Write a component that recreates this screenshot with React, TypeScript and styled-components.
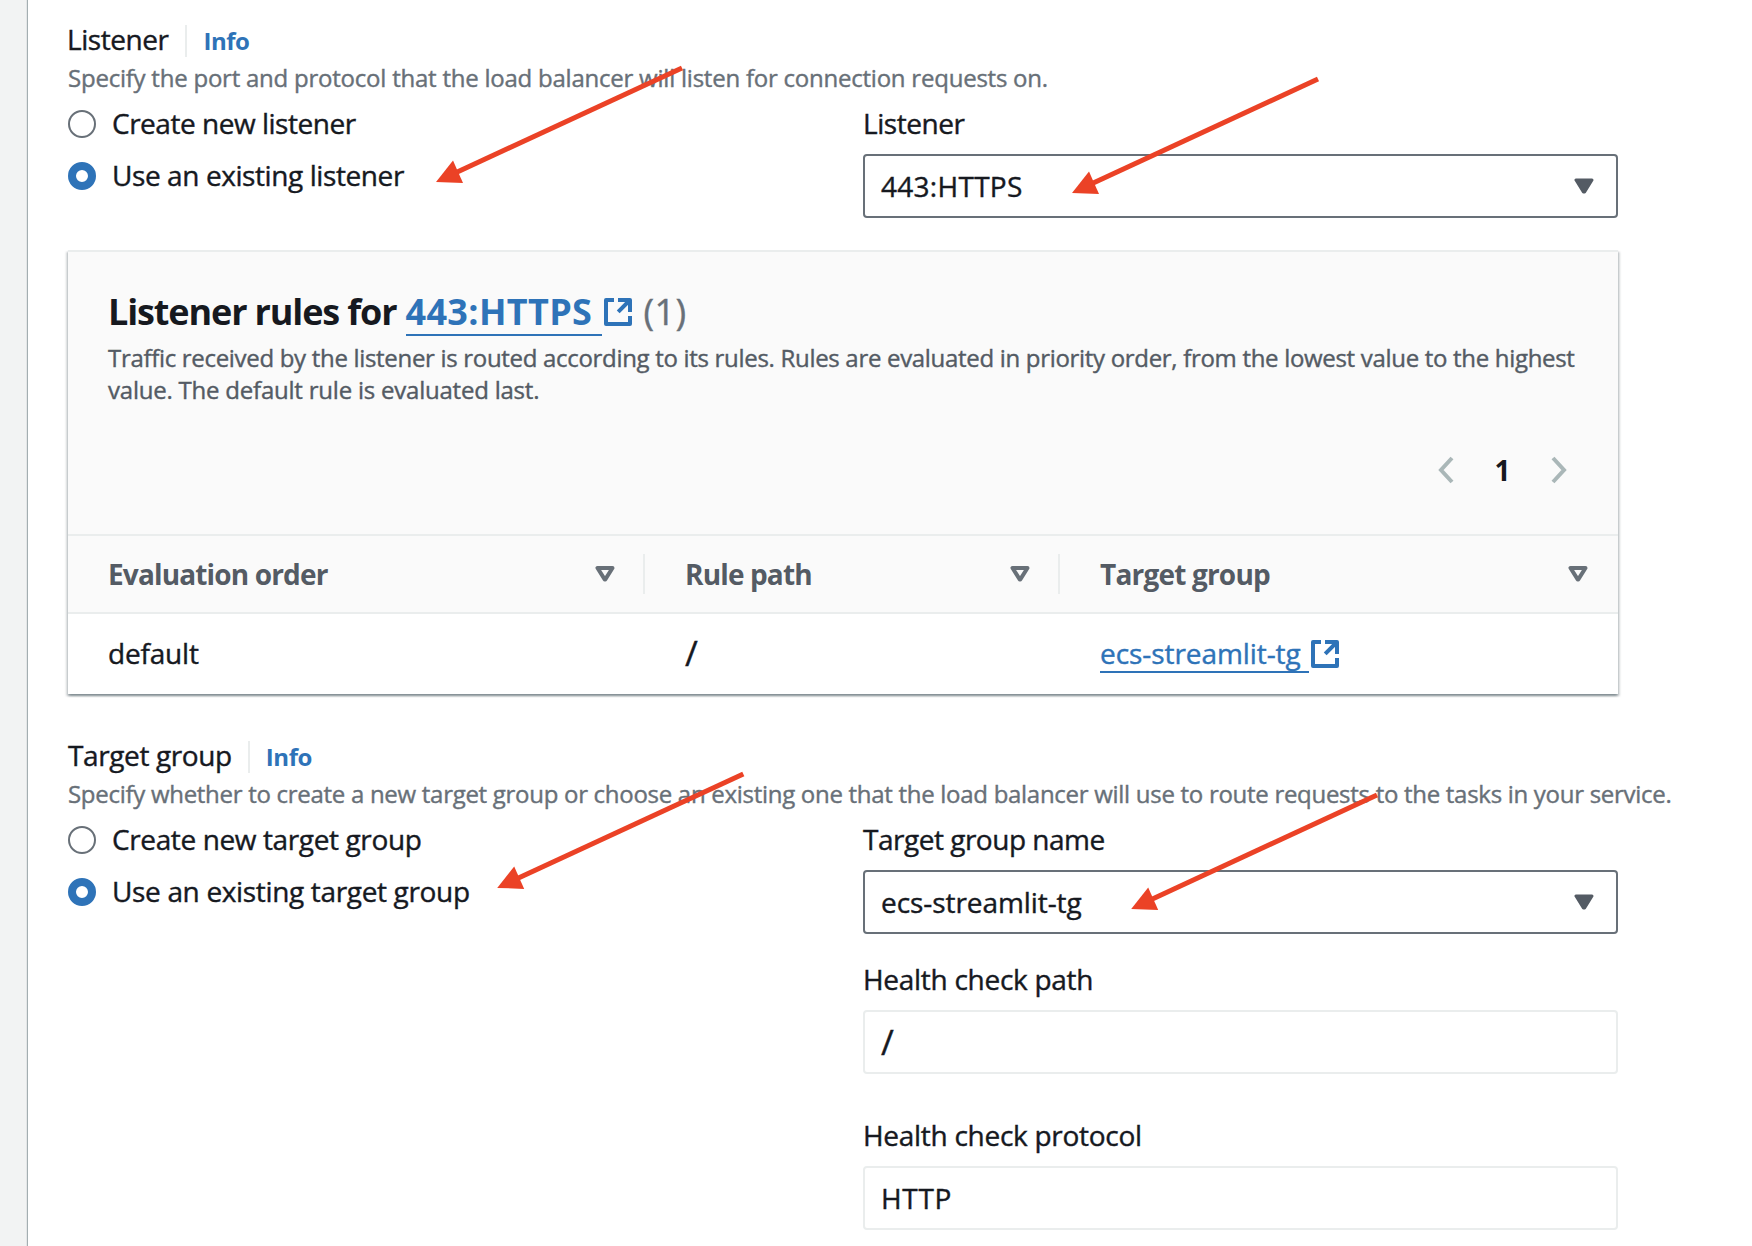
import React from "react";
import styled, { createGlobalStyle, css } from "styled-components";

const GlobalStyle = createGlobalStyle`
  * { box-sizing: border-box; }
  html, body { margin: 0; padding: 0; height: 1246px; overflow: hidden; background: #f2f3f3; }
  body {
    font-family: "Open Sans", "Noto Sans", sans-serif;
    color: #16191f;
    -webkit-text-stroke: 0.4px;
  }
`;

const blue = "#2e73b8";
const slate = "#545b64";

type Fit = { $ls?: number; $dx?: number };
const fit = css<Fit>`
  letter-spacing: ${(p) => p.$ls ?? 0}px;
  margin-left: ${(p) => p.$dx ?? 0}px;
  white-space: nowrap;
`;

const Page = styled.div`
  position: relative;
  width: 1752px;
  height: 1246px;
  overflow: hidden;
  padding-left: 28px;
  background: #f2f3f3;
`;
const Panel = styled.main`
  height: 100%;
  padding: 17px 0 0 40px;
  background: #fff;
  box-shadow: -1px 0 1px rgba(0, 28, 36, 0.32);
`;
const Section = styled.section<{ $top?: number }>`
  margin-top: ${(p) => p.$top ?? 0}px;
`;
const SectionTitle = styled.div`
  display: flex;
  align-items: center;
  height: 44px;
`;
const Label = styled.span<Fit>`
  ${fit}
  display: block;
  font-size: 28px;
  line-height: 44px;
`;
const Divider = styled.span<{ $gap: number }>`
  width: 2px;
  height: 32px;
  margin: 4px 16px 0 ${(p) => p.$gap}px;
  background: #eaeded;
`;
const InfoLink = styled.a<Fit>`
  ${fit}
  padding-top: 4px;
  font-size: 24px;
  line-height: 44px;
  font-weight: 700;
  color: ${blue};
  -webkit-text-stroke: 0;
`;
const Hint = styled.p<Fit>`
  ${fit}
  margin-top: 0;
  margin-bottom: 0;
  padding-top: 1px;
  font-size: 24px;
  line-height: 32px;
  color: #687078;
`;
const Columns = styled.div`
  display: grid;
  grid-template-columns: 795px 755px;
  padding-top: 7px;
`;
const RadioGroup = styled.div`
  display: flex;
  flex-direction: column;
  gap: 8px;
`;
const RadioRow = styled.label`
  display: flex;
  align-items: center;
  gap: 16px;
  height: 44px;
`;
const RadioDot = styled.span<{ $on?: boolean }>`
  width: 28px;
  height: 28px;
  margin-top: 2px;
  border-radius: 50%;
  border: ${(p) => (p.$on ? `8px solid ${blue}` : "2px solid #687078")};
  background: #fff;
`;
const Field = styled.div<{ $top?: number }>`
  padding-top: ${(p) => p.$top ?? 0}px;
`;
const Control = styled.div<{ $readonly?: boolean }>`
  display: flex;
  align-items: center;
  justify-content: space-between;
  height: 64px;
  margin-top: 9px;
  padding: 0 22px 0 16px;
  border: 2px solid ${(p) => (p.$readonly ? "#eaeded" : "#687078")};
  border-radius: 4px;
  background: #fff;
`;
const Value = styled(Label)`
  padding-bottom: 1px;
`;
const Slash = styled.span`
  font-size: 35px;
  line-height: 44px;
`;

const Card = styled.div`
  width: 1550px;
  height: 444px;
  margin-top: 32px;
  border-top: 2px solid #eaeded;
  background: #fff;
  box-shadow: 0 2px 2px rgba(0, 28, 36, 0.3), 2px 2px 2px rgba(0, 28, 36, 0.15), -2px 2px 2px rgba(0, 28, 36, 0.15);
`;
const CardHeader = styled.header`
  height: 284px;
  padding: 36px 51px 0 40px;
  border-bottom: 2px solid #eaeded;
  background: #fafafa;
`;
const Heading = styled.h2`
  display: flex;
  align-items: center;
  height: 48px;
  margin: 0 0 6px;
  font-size: 36px;
  line-height: 48px;
  -webkit-text-stroke: 0;
`;
const HeadingText = styled.span<Fit>`
  ${fit}
`;
const Count = styled.span<Fit>`
  ${fit}
  font-weight: 400;
  color: #687078;
  -webkit-text-stroke: 0.4px;
`;
const LinkText = styled.a<Fit & { $w: number; $h: number }>`
  ${fit}
  width: ${(p) => p.$w}px;
  height: ${(p) => p.$h}px;
  border-bottom: 2px solid ${blue};
  color: ${blue};
`;
const CardText = styled.p<Fit>`
  ${fit}
  margin-top: 0;
  margin-bottom: 0;
  font-size: 24px;
  line-height: 32px;
  color: ${slate};
`;
const Pagination = styled.nav`
  display: flex;
  justify-content: flex-end;
  align-items: center;
  height: 44px;
  margin-top: 42px;
  font-size: 28px;
  font-weight: 700;
  -webkit-text-stroke: 0;
`;
const PageNumber = styled.span`
  width: 97px;
  text-align: center;
  line-height: 44px;
`;
const Row = styled.div<{ $head?: boolean }>`
  display: grid;
  grid-template-columns: 577px 415px 558px;
  align-items: center;
  height: ${(p) => (p.$head ? 78 : 80)}px;
  padding-bottom: ${(p) => (p.$head ? 0 : 2)}px;
  font-size: 28px;
  line-height: 44px;
  ${(p) =>
    p.$head &&
    css`
      border-bottom: 2px solid #eaeded;
      background: #fafafa;
      color: ${slate};
      font-weight: 700;
      -webkit-text-stroke: 0;
    `}
`;
const HeadCell = styled.div<{ $last?: boolean }>`
  display: flex;
  align-items: center;
  justify-content: space-between;
  height: 40px;
  padding: 0 ${(p) => (p.$last ? 30 : 28)}px 0 40px;
  border-right: ${(p) => (p.$last ? "none" : "2px solid #eaeded")};
`;
const Cell = styled.div`
  display: flex;
  align-items: flex-start;
  height: 44px;
  padding-left: 40px;
`;
const CellText = styled.span<Fit>`
  ${fit}
`;
const Icon = styled.svg<{ $l?: number; $r?: number; $t?: number }>`
  flex: none;
  display: block;
  margin: ${(p) => p.$t ?? 0}px ${(p) => p.$r ?? 0}px 0 ${(p) => p.$l ?? 0}px;
`;
const Annotations = styled.svg`
  position: absolute;
  inset: 0;
  pointer-events: none;
`;

const External = ({ l, r, t }: { l: number; r?: number; t?: number }) => (
  <Icon $l={l} $r={r} $t={t} width="28" height="28" viewBox="0 0 28 28" fill="none" stroke={blue} strokeWidth="4" strokeLinejoin="round">
    <path d="M10 2H2V26H26V18" />
    <path d="M14 2H26V14" />
    <path d="M25 3L14.2 13.8" />
  </Icon>
);
const CaretFilled = () => (
  <Icon width="20" height="16" viewBox="0 0 20 16">
    <path d="M2 2H18L10.6 14H9.4Z" fill={slate} stroke={slate} strokeWidth="3" strokeLinejoin="round" />
  </Icon>
);
const CaretHollow = () => (
  <Icon width="20" height="16" viewBox="0 0 20 16">
    <path d="M2.5 2H17.5L10.3 13.4H9.7Z" fill="none" stroke="#687078" strokeWidth="4" strokeLinejoin="round" />
  </Icon>
);
const Chevron = ({ next }: { next?: boolean }) => (
  <Icon width="16" height="28" viewBox="0 0 16 28" fill="none" stroke="#aab7b8" strokeWidth="4">
    <path d={next ? "M2 2L13 14L2 26" : "M14 2L3 14L14 26"} />
  </Icon>
);

const arrows = [
  { tip: [436, 181.9], tail: [682, 68] },
  { tip: [1072, 192.9], tail: [1318, 79] },
  { tip: [497.2, 887.9], tail: [743.3, 774] },
  { tip: [1131.2, 908.9], tail: [1377, 795] },
];

export default function App() {
  return (
    <>
      <GlobalStyle />
      <Page>
        <Panel>
          <Section>
            <SectionTitle>
              <Label $ls={-0.46} $dx={-1}>Listener</Label>
              <Divider $gap={17} />
              <InfoLink $ls={-0.44}>Info</InfoLink>
            </SectionTitle>
            <Hint $ls={-0.23}>Specify the port and protocol that the load balancer will listen for connection requests on.</Hint>
            <Columns>
              <RadioGroup>
                <RadioRow><RadioDot /><Label $ls={-0.48}>Create new listener</Label></RadioRow>
                <RadioRow><RadioDot $on /><Label $ls={-0.41}>Use an existing listener</Label></RadioRow>
              </RadioGroup>
              <Field>
                <Label $ls={-0.46}>Listener</Label>
                <Control><Value $ls={0.28}>443:HTTPS</Value><CaretFilled /></Control>
              </Field>
            </Columns>
          </Section>

          <Card>
            <CardHeader>
              <Heading>
                <HeadingText $ls={-1.13}>Listener rules for</HeadingText>
                <LinkText $ls={0.34} $dx={9} $w={196} $h={48}>443:HTTPS</LinkText>
                <External l={2} r={12} />
                <Count $ls={0.4}>(1)</Count>
              </Heading>
              <CardText $ls={-0.31}>
                Traffic received by the listener is routed according to its rules. Rules are evaluated in priority order, from the lowest value to the highest
              </CardText>
              <CardText $ls={-0.22}>value. The default rule is evaluated last.</CardText>
              <Pagination>
                <Chevron />
                <PageNumber>1</PageNumber>
                <Chevron next />
              </Pagination>
            </CardHeader>
            <Row $head>
              <HeadCell><CellText $ls={-0.85}>Evaluation order</CellText><CaretHollow /></HeadCell>
              <HeadCell><CellText $ls={-0.85}>Rule path</CellText><CaretHollow /></HeadCell>
              <HeadCell $last><CellText $ls={-0.81}>Target group</CellText><CaretHollow /></HeadCell>
            </Row>
            <Row>
              <Cell><CellText $ls={-0.18}>default</CellText></Cell>
              <Cell><Slash>/</Slash></Cell>
              <Cell><LinkText $ls={-0.07} $w={209} $h={42}>ecs-streamlit-tg</LinkText><External l={2} t={9} /></Cell>
            </Row>
          </Card>

          <Section $top={39}>
            <SectionTitle>
              <Label $ls={-0.38}>Target group</Label>
              <Divider $gap={16} />
              <InfoLink $ls={-0.44}>Info</InfoLink>
            </SectionTitle>
            <Hint $ls={-0.287}>Specify whether to create a new target group or choose an existing one that the load balancer will use to route requests to the tasks in your service.</Hint>
            <Columns>
              <RadioGroup>
                <RadioRow><RadioDot /><Label $ls={-0.38}>Create new target group</Label></RadioRow>
                <RadioRow><RadioDot $on /><Label $ls={-0.34}>Use an existing target group</Label></RadioRow>
              </RadioGroup>
              <div>
                <Field>
                  <Label $ls={-0.49}>Target group name</Label>
                  <Control><Value $ls={-0.07}>ecs-streamlit-tg</Value><CaretFilled /></Control>
                </Field>
                <Field $top={23}>
                  <Label $ls={-0.28}>Health check path</Label>
                  <Control $readonly><Slash>/</Slash></Control>
                </Field>
                <Field $top={39}>
                  <Label $ls={-0.28}>Health check protocol</Label>
                  <Control $readonly><Value $ls={0.7}>HTTP</Value></Control>
                </Field>
              </div>
            </Columns>
          </Section>
        </Panel>

        <Annotations width="1752" height="1246" fill="#eb4226" stroke="#eb4226">
          {arrows.map(({ tip: [x, y], tail: [tx, ty] }) => (
            <g key={x}>
              <line x1={x + 18} y1={y - 8.5} x2={tx} y2={ty} strokeWidth="5" />
              <polygon points={`${x},${y} ${x + 17},${y - 21.4} ${x + 27},${y + 1}`} stroke="none" />
            </g>
          ))}
        </Annotations>
      </Page>
    </>
  );
}
